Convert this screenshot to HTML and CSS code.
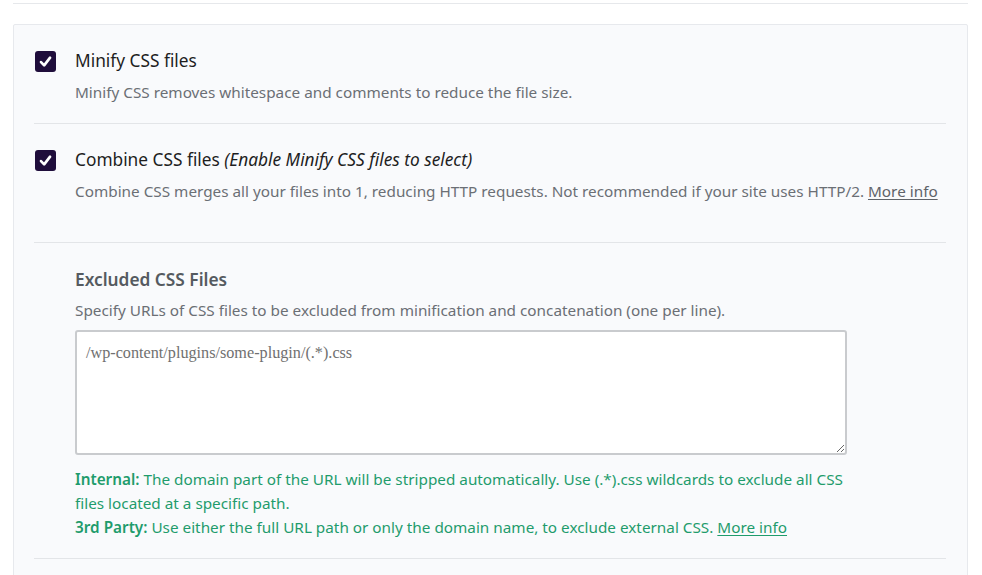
FILE: index.html
```html
<!DOCTYPE html>
<html>
<head>
<meta charset="utf-8">
<link rel="stylesheet" href="styles.css">
</head>
<body>
<div class="top-rule"></div>
<div class="card">
  <div class="option first">
    <div class="head">
      <span class="checkbox"><svg viewBox="0 0 22 22" width="21" height="21"><path d="M6.3 11.6 L9.6 15 L15.8 7" fill="none" stroke="#fff" stroke-width="2.8" stroke-linecap="round" stroke-linejoin="round"/></svg></span>
      <span class="title">Minify CSS files</span>
    </div>
    <p class="desc">Minify CSS removes whitespace and comments to reduce the file size.</p>
  </div>
  <div class="option second">
    <div class="head">
      <span class="checkbox"><svg viewBox="0 0 22 22" width="21" height="21"><path d="M6.3 11.6 L9.6 15 L15.8 7" fill="none" stroke="#fff" stroke-width="2.8" stroke-linecap="round" stroke-linejoin="round"/></svg></span>
      <span class="title">Combine CSS files <em>(Enable Minify CSS files to select)</em></span>
    </div>
    <p class="desc">Combine CSS merges all your files into 1, reducing HTTP requests. Not recommended if your site uses HTTP/2. <a href="#">More info</a></p>
  </div>
  <div class="sub">
    <h3 class="sub-title">Excluded CSS Files</h3>
    <p class="sub-desc">Specify URLs of CSS files to be excluded from minification and concatenation (one per line).</p>
    <textarea class="field" placeholder="/wp-content/plugins/some-plugin/(.*).css"></textarea>
    <p class="note"><strong>Internal:</strong> The domain part of the URL will be stripped automatically. Use (.*).css wildcards to exclude all CSS files located at a specific path.<br><strong>3rd Party:</strong> Use either the full URL path or only the domain name, to exclude external CSS. <a href="#">More info</a></p>
  </div>
</div>
</body>
</html>
```

FILE: styles.css
```css
* { box-sizing: border-box; }
html, body { margin: 0; padding: 0; background: #ffffff; height: 575px; overflow: hidden; }
body {
  font-family: "Noto Sans", "Open Sans", sans-serif;
  color: #23282d;
}
.top-rule {
  margin: 3px 14px 0 13px;
  border-top: 1px solid #e6e8eb;
}
.card {
  margin: 20px 14px 0 13px;
  background: #f9fafc;
  border: 1px solid #e7e9ed;
  border-radius: 2px;
  padding: 0 21px 0 20px;
  height: 560px;
}
.option {
  border-bottom: 1px solid #e3e5e8;
}
.option.first { padding: 25px 0 20px; }
.option.second { padding: 25px 0 40px; }
.head {
  display: flex;
  align-items: center;
  gap: 19px;
  padding-left: 1px;
  height: 22px;
}
.checkbox {
  width: 21px;
  height: 21px;
  border-radius: 3px;
  background: #1f0d3b;
  display: flex;
  flex: none;
}
.title {
  font-size: 17.3px;
  line-height: 22px;
  color: #1e1e1e;
}
.title em { font-style: italic; }
.desc {
  margin: 9px 0 0 41px;
  font-size: 15.3px;
  line-height: 22px;
  color: #6b6f75;
}
.desc a, .note a { color: inherit; text-decoration: underline; text-underline-offset: 2px; }
.desc a { color: #5f6369; }
.sub {
  padding: 26px 0 19px 41px;
  border-bottom: 1px solid #e3e5e8;
}
.sub-title {
  margin: 0;
  font-size: 17.3px;
  line-height: 22px;
  font-weight: 600;
  color: #555a60;
}
.sub-desc {
  margin: 8px 0 0;
  font-size: 15.3px;
  line-height: 22px;
  color: #6b6f75;
}
.field {
  display: block;
  margin-top: 9px;
  width: 772px;
  height: 125px;
  border: 2px solid #c9cbce;
  border-radius: 3px;
  background: #ffffff;
  padding: 10px 9px;
  font-family: "Liberation Serif", serif;
  font-size: 16.2px;
  line-height: 22px;
  color: #333;
}
.field::placeholder { color: #707070; }
.note {
  margin: 12px 0 0;
  max-width: 772px;
  font-size: 15.3px;
  line-height: 24px;
  color: #1f9c6c;
}
.note strong { font-weight: 600; }
```
